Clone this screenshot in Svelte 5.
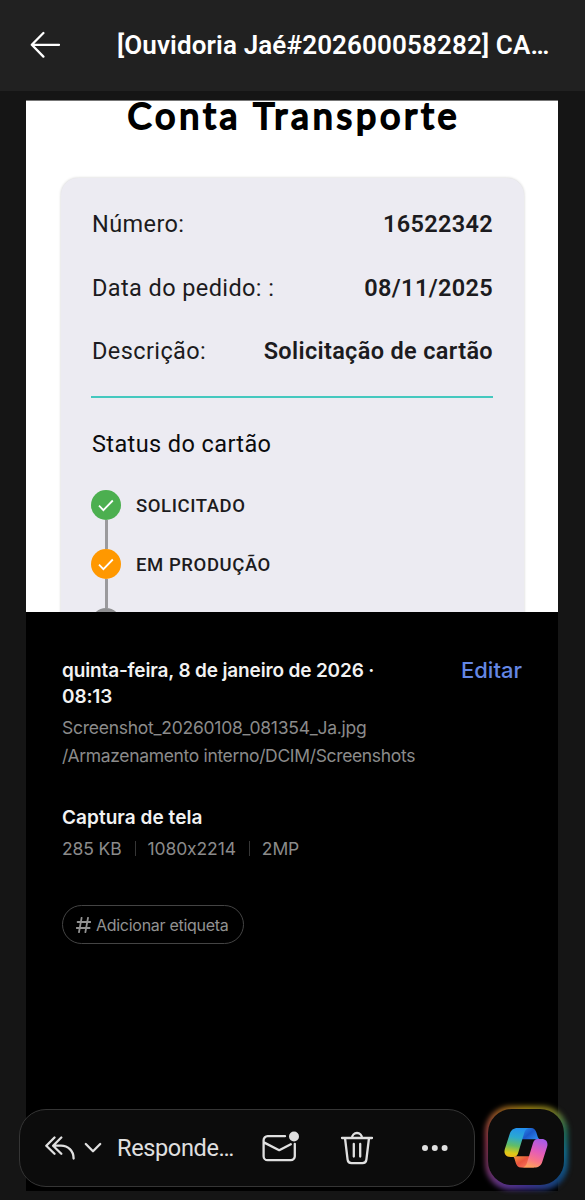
<script lang="ts">
  type Row = { label: string; value: string };
  type Step = { label: string; state: 'done' | 'active' };

  const subject = '[Ouvidoria Jaé#202600058282] CA…';

  const rows: Row[] = [
    { label: 'Número:', value: '16522342' },
    { label: 'Data do pedido: :', value: '08/11/2025' },
    { label: 'Descrição:', value: 'Solicitação de cartão' }
  ];

  const steps: Step[] = [
    { label: 'SOLICITADO', state: 'done' },
    { label: 'EM PRODUÇÃO', state: 'active' }
  ];

  const meta = ['285 KB', '1080x2214', '2MP'];
</script>

<div class="screen">
  <header class="topbar">
    <button type="button" class="plain" aria-label="Voltar">
      <svg width="31" height="30" viewBox="0 0 31 30" class="stroke">
        <path d="M14.4 3 2.8 14.8l11.6 11.8M3 14.8h27" />
      </svg>
    </button>
    <h1>{subject}</h1>
  </header>

  <main class="message">
    <section class="capture">
      <h2>Conta Transporte</h2>
      <div class="card">
        {#each rows as row}
          <div class="row">
            <span class="row-label">{row.label}</span>
            <span class="row-value">{row.value}</span>
          </div>
        {/each}
        <hr />
        <h3>Status do cartão</h3>
        <ul class="steps">
          {#each steps as step}
            <li>
              <span class={['dot', step.state]}>
                <svg width="30" height="30" viewBox="0 0 30 30">
                  <path d="m8 15.7 4.4 4.4 9.4-9.6" />
                </svg>
              </span>
              <span class="step-label">{step.label}</span>
            </li>
          {/each}
          <li><span class="dot pending"></span></li>
        </ul>
      </div>
    </section>

    <section class="details">
      <div class="details-head">
        <p class="strong date">quinta-feira, 8 de janeiro de 2026 ·<br />08:13</p>
        <a class="edit" href="#editar">Editar</a>
      </div>
      <p class="path name">Screenshot_20260108_081354_Ja.jpg</p>
      <p class="path folder">/Armazenamento interno/DCIM/Screenshots</p>
      <p class="strong kind">Captura de tela</p>
      <div class="meta">
        {#each meta as item}
          <span>{item}</span>
        {/each}
      </div>
      <button type="button" class="tag">
        <svg width="15" height="16" viewBox="0 0 15 16">
          <path d="M5.6.8 3 15.2M12 .8 9.4 15.2M1.6 5h13M.6 11h13" />
        </svg>
        <span>Adicionar etiqueta</span>
      </button>
    </section>
  </main>

  <nav class="actions">
    <button type="button" class="plain reply-all" aria-label="Responder a todos">
      <svg width="30" height="24" viewBox="0 0 30 24" class="stroke">
        <path d="M9.5 1.5 1.3 9.7l8.2 8M16.3 1.5 8.1 9.7l8.2 8M8.5 9.7h7.5c7 0 12.6 5 12.6 12.8" />
      </svg>
    </button>
    <button type="button" class="plain more-replies" aria-label="Opções de resposta">
      <svg width="18" height="12" viewBox="0 0 18 12" class="stroke">
        <path d="m1.8 2 7.2 7.3L16.2 2" />
      </svg>
    </button>
    <span class="reply">Responde…</span>
    <button type="button" class="plain unread" aria-label="Marcar como não lida">
      <svg width="38" height="32" viewBox="0 0 38 32" class="stroke">
        <path d="M24 5.2H6.6A4 4 0 0 0 2.6 9.2v16a4 4 0 0 0 4 4h23.2a4 4 0 0 0 4-4V12.8M2.8 11.4l15.4 7.8 11.6-6" />
        <circle cx="33" cy="5.5" r="5" class="fill" />
      </svg>
    </button>
    <button type="button" class="plain trash" aria-label="Excluir">
      <svg width="34" height="36" viewBox="0 0 34 36" class="stroke">
        <path d="M2 8h30M12 8a5 5 0 0 1 10 0M5 8l2.6 21.7a4 4 0 0 0 4 3.5h10.8a4 4 0 0 0 4-3.5L29 8M13.8 14v12.5M20.2 14v12.5" />
      </svg>
    </button>
    <button type="button" class="plain more" aria-label="Mais">
      <svg width="26" height="6" viewBox="0 0 26 6">
        <circle cx="3" cy="3" r="3" class="fill" />
        <circle cx="12.8" cy="3" r="3" class="fill" />
        <circle cx="22.6" cy="3" r="3" class="fill" />
      </svg>
    </button>
  </nav>

  <button type="button" class="copilot" aria-label="Copilot">
    <svg width="44" height="42" viewBox="0 0 44 42">
      <defs>
        <linearGradient id="left" x1="0.5" y1="0" x2="0.35" y2="1">
          <stop offset="0" stop-color="#2390ee" />
          <stop offset="0.32" stop-color="#2ba9d0" />
          <stop offset="0.62" stop-color="#62bd66" />
          <stop offset="0.88" stop-color="#dccb18" />
          <stop offset="1" stop-color="#edb91b" />
        </linearGradient>
        <linearGradient id="right" x1="0.7" y1="0" x2="0.35" y2="1">
          <stop offset="0" stop-color="#a85be6" />
          <stop offset="0.42" stop-color="#e35cba" />
          <stop offset="0.72" stop-color="#f87489" />
          <stop offset="1" stop-color="#fda35c" />
        </linearGradient>
        <linearGradient id="fold-top" x1="0" y1="0" x2="1" y2="0.6">
          <stop offset="0" stop-color="#2b9cf5" />
          <stop offset="0.6" stop-color="#1b58c9" />
          <stop offset="1" stop-color="#2b82ea" />
        </linearGradient>
        <linearGradient id="fold-bottom" x1="0" y1="0" x2="1" y2="0.8">
          <stop offset="0" stop-color="#f6a33b" />
          <stop offset="0.5" stop-color="#e9543f" />
          <stop offset="1" stop-color="#ff7c63" />
        </linearGradient>
      </defs>
      <path fill="url(#fold-top)" d="M14 1h13c3 0 4.5 1.8 5.4 4.5l1.3 4.3c.5 1.7 1.4 2.4 2.8 2.4H17Z" />
      <path fill="url(#fold-bottom)" d="M30 40.6H17.2c-3.1 0-4.6-1.9-5.4-4.5l-1.3-4.4c-.6-1.8-1.5-2.4-2.9-2.4H27Z" />
      <path fill="url(#left)" d="M26 1c-2.9 0-4.8 1.8-5.8 5l-5.8 19.2c-.8 2.8-2.2 4.7-5 4.7H6.2c-4.6 0-6.6-3.5-5.4-7.7L5.6 7.2C6.9 3.2 9.4 1 13.6 1Z" />
      <path fill="url(#right)" d="M17.5 40.6c2.9 0 4.6-1.8 5.6-5l5.7-18.8c.8-2.8 2.2-4.7 5-4.7h4c4.6 0 6.5 3.5 5.3 7.7l-4.7 14.6c-1.3 4-3.8 6.2-8 6.2Z" />
    </svg>
  </button>
</div>

<style>
  :global(body) {
    background: #151515;
  }

  h1,
  h2,
  h3,
  p,
  ul {
    margin: 0;
    padding: 0;
    font-weight: 400;
  }

  svg {
    display: block;
  }

  .screen {
    position: relative;
    height: 1200px;
    overflow: hidden;
    background: #151515;
    font-family: Roboto, sans-serif;
  }

  .plain {
    padding: 0;
    border: 0;
    background: none;
    color: inherit;
  }

  .stroke {
    fill: none;
    stroke: currentColor;
    stroke-width: 2.3;
    stroke-linecap: round;
    stroke-linejoin: round;
  }

  .fill {
    fill: currentColor;
    stroke: none;
  }

  .topbar {
    display: flex;
    align-items: center;
    box-sizing: border-box;
    height: 91px;
    padding: 0 0 1px 29px;
    gap: 57px;
    background: #212121;
    color: #fff;
  }

  h1 {
    font-size: 26px;
    font-weight: 600;
    letter-spacing: 0.13px;
    white-space: nowrap;
  }

  .message {
    box-sizing: border-box;
    height: 1091px;
    margin: 9px 27px 0 26px;
    background: #000;
  }

  .capture {
    box-sizing: border-box;
    height: 512px;
    border-top: 1px solid #777;
    overflow: hidden;
    background: #fff;
  }

  h2 {
    height: 77px;
    padding-left: 4px;
    color: #000;
    font-family: Lato, sans-serif;
    font-size: 36px;
    line-height: 28px;
    letter-spacing: 3.8px;
    text-align: center;
    white-space: nowrap;
    -webkit-text-stroke: 2px #000;
  }

  .card {
    box-sizing: border-box;
    height: 600px;
    margin: 0 34px 0 35px;
    padding: 14px 31px 0 30px;
    border-radius: 17px;
    background: #ecebf2;
    box-shadow: 0 0 3px rgba(0, 0, 0, 0.2);
    color: #1c1b20;
  }

  .row {
    display: flex;
    justify-content: space-between;
    align-items: center;
    height: 63.7px;
    padding-left: 1px;
    font-size: 23.5px;
    letter-spacing: 0.4px;
    white-space: nowrap;
  }

  .row-value {
    font-weight: 600;
    letter-spacing: 0.34px;
  }

  hr {
    height: 2px;
    margin: 13px 0 32px;
    border: 0;
    background: #44c8bf;
  }

  h3 {
    height: 60px;
    padding-left: 1px;
    color: #0b0b0d;
    font-size: 23.5px;
    line-height: 28px;
    letter-spacing: 0.4px;
  }

  .steps {
    list-style: none;
  }

  .steps li {
    position: relative;
    display: flex;
    align-items: center;
    gap: 15px;
    height: 30px;
    margin-bottom: 29px;
  }

  .steps li:not(:last-child)::after {
    content: '';
    position: absolute;
    top: 30px;
    left: 14px;
    width: 3px;
    height: 29px;
    background: #9b9a9d;
  }

  .dot {
    width: 30px;
    height: 30px;
    border-radius: 50%;
  }

  .dot path {
    fill: none;
    stroke: #fff;
    stroke-width: 1.8;
  }

  .done {
    background: #4caf50;
  }

  .active {
    background: #ff9800;
  }

  .pending {
    background: #8f8f91;
  }

  .step-label {
    padding-top: 2px;
    font-size: 18.5px;
    font-weight: 500;
    letter-spacing: 0.58px;
  }

  .details {
    padding: 46px 36px 0;
    color: #8b8b8b;
    font-family: Inter, sans-serif;
    font-size: 17.5px;
    letter-spacing: -0.25px;
    font-feature-settings: 'calt' 0;
  }

  .details-head {
    display: flex;
    justify-content: space-between;
    align-items: flex-start;
    height: 56px;
  }

  .strong {
    color: #f2f2f2;
    font-size: 19px;
    font-weight: 600;
    line-height: 26px;
    letter-spacing: 0.05px;
    white-space: nowrap;
  }

  .date {
    letter-spacing: -0.15px;
  }

  .edit {
    color: #6487e4;
    font-size: 22px;
    font-weight: 500;
    line-height: 24px;
    letter-spacing: 0;
    text-decoration: none;
  }

  .path {
    line-height: 28px;
    white-space: nowrap;
  }

  .folder {
    letter-spacing: -0.34px;
  }

  .kind {
    margin-top: 35px;
  }

  .meta {
    display: flex;
    margin-top: 5px;
    line-height: 26px;
    letter-spacing: -0.12px;
  }

  .meta span + span {
    position: relative;
    padding-left: 26px;
  }

  .meta span + span::before {
    content: '';
    position: absolute;
    top: 5px;
    left: 13px;
    width: 1px;
    height: 15px;
    background: #363636;
  }

  .tag {
    display: flex;
    align-items: center;
    box-sizing: border-box;
    width: 182px;
    height: 39px;
    margin-top: 43px;
    padding: 0 0 0 13px;
    gap: 5px;
    border: 1px solid #444;
    border-radius: 20px;
    background: none;
    color: #929292;
    font-family: inherit;
    font-size: 16px;
    letter-spacing: -0.28px;
    white-space: nowrap;
  }

  .tag path {
    fill: none;
    stroke: #929292;
    stroke-width: 1.8;
    stroke-linecap: round;
  }

  /* floating bars over the message */
  .actions {
    position: absolute;
    left: 19px;
    bottom: 13px;
    display: flex;
    align-items: center;
    box-sizing: border-box;
    width: 456px;
    height: 78px;
    padding-left: 25px;
    border: 1px solid #353535;
    border-radius: 27px;
    background: #0c0c0c;
    color: #e0e0e0;
  }

  .more-replies {
    margin-left: 9px;
  }

  .reply {
    width: 118px;
    margin-left: 15px;
    font-size: 23.5px;
    letter-spacing: -0.35px;
    white-space: nowrap;
  }

  .unread {
    margin: -3px 0 0 26px;
  }

  .trash {
    margin-left: 41px;
  }

  .more {
    margin-left: 48px;
  }

  .copilot {
    position: absolute;
    left: 487px;
    bottom: 12px;
    isolation: isolate;
    display: grid;
    place-items: center;
    width: 80px;
    height: 80px;
    padding: 0 2px 1px 0;
    border: 0;
    background: none;
  }

  .copilot::before,
  .copilot::after {
    content: '';
    position: absolute;
    border-radius: 26px;
  }

  .copilot::before {
    inset: -2px -1px -2px -2px;
    z-index: -2;
    background: conic-gradient(#9c8210, #7f781f 9%, #1f6c58 19%, #116b8c 27%, #11457b 37%, #3e308b 50%, #57338a 58%, #6e305c 68%, #8f3349 78%, #955b20 90%, #9c8210);
    filter: blur(2.8px);
  }

  .copilot::after {
    inset: 1px 3px 3px 1px;
    z-index: -1;
    border-radius: 24px;
    background: #0c0c0c;
  }
</style>
